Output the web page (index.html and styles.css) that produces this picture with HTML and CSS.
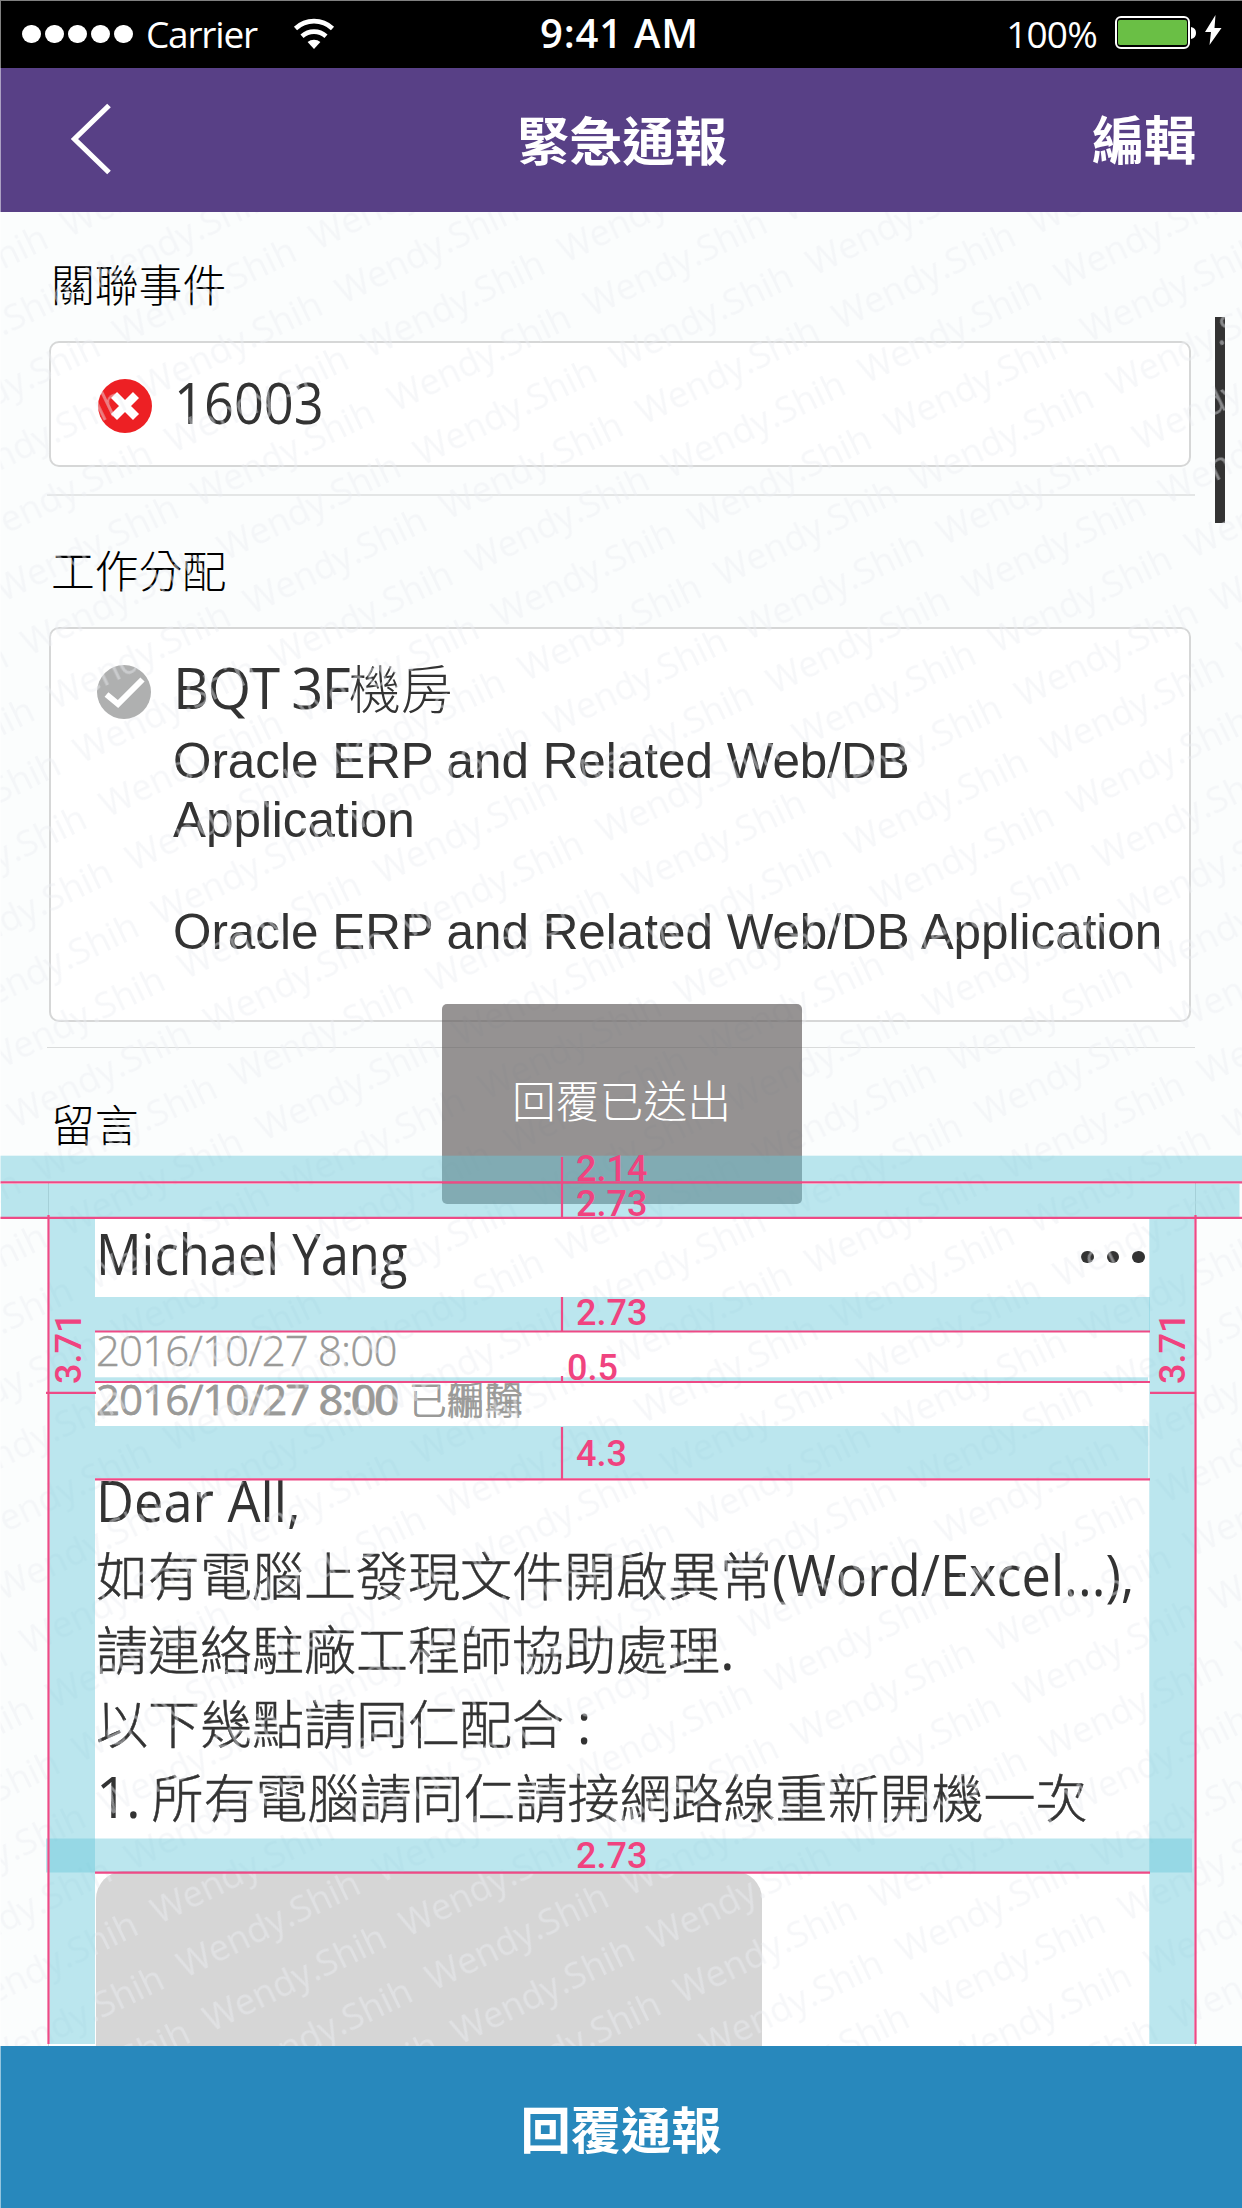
FILE: index.html
```html
<!DOCTYPE html>
<html lang="zh-Hant">
<head>
<meta charset="utf-8">
<title>緊急通報</title>
<link rel="stylesheet" href="styles.css">
</head>
<body>
<div class="screen">
  <div class="status">
    <div class="status-left">
      <span class="signal"><i></i><i></i><i></i><i></i><i></i></span>
      <span class="carrier">Carrier</span>
      <svg class="wifi" width="42" height="32" viewBox="0 0 42 32">
        <path d="M2.5 10.5 A27 27 0 0 1 39.5 10.5" fill="none" stroke="#fff" stroke-width="4.6"/>
        <path d="M9 18.2 A18 18 0 0 1 33 18.2" fill="none" stroke="#fff" stroke-width="4.6"/>
        <path d="M14.6 24 A10 10 0 0 1 27.4 24 L21 31 Z" fill="#fff"/>
      </svg>
    </div>
    <div class="clock">9:41 AM</div>
    <div class="status-right">
      <span class="percent">100%</span>
      <svg class="battery" width="110" height="40" viewBox="0 0 110 40">
        <rect x="2" y="5" width="73" height="31" rx="5" fill="none" stroke="#fff" stroke-width="2"/>
        <rect x="4" y="8" width="69" height="25" rx="2" fill="#6abf45"/>
        <path d="M77 15 q5 1 5 6 q0 5 -5 6 Z" fill="#fff"/>
        <path d="M101.5 3 L91 20 L97 20 L95.500 33 L107.500 16 L100.500 16 Z" fill="#fff"/>
      </svg>
    </div>
  </div>
  <header class="nav">
    <svg class="back" width="50" height="76" viewBox="0 0 50 76"><path d="M43 4.500 L8.500 38 L43 71.500" fill="none" stroke="#fff" stroke-width="5.200"/></svg>
    <h1>緊急通報</h1>
    <span class="edit">編輯</span>
  </header>
  <main class="content">
    <h2>關聯事件</h2>
    <div class="card event">
      <svg width="54" height="54" viewBox="0 0 54 54"><circle cx="27" cy="27" r="27" fill="#ed2024"/><path d="M16 16 L38 38 M38 16 L16 38" stroke="#fff" stroke-width="8.500"/></svg>
      <span class="latin narrow">16003</span>
    </div>
    <hr>
    <h2>工作分配</h2>
    <div class="card work">
      <svg width="54" height="54" viewBox="0 0 54 54"><circle cx="27" cy="27" r="27" fill="#afb0b0"/><path d="M9.500 29.500 L21 39 L45.500 14.500" fill="none" stroke="#fff" stroke-width="6"/></svg>
      <div class="work-text">
        <p class="room"><span class="latin">BQT 3F</span>機房</p>
        <p class="system">Oracle ERP and Related Web/DB<br>Application</p>
        <p class="system">Oracle ERP and Related Web/DB Application</p>
      </div>
    </div>
    <hr class="thin">
    <h2>留言</h2>
    <article class="comment">
      <div class="author"><span class="latin narrow">Michael Yang</span><span class="more"><i></i><i></i><i></i></span></div>
      <div class="date">2016/10/27 8:00</div>
      <div class="date edited">
        <span class="stack"><span>2016/10/27 8:00</span><span class="strong">2016/10/27 8:00</span></span>
        <span class="stack state"><span>已編輯</span><span>已刪除</span></span>
      </div>
      <div class="message"><span class="latin narrow">Dear All,</span><br>如有電腦上發現文件開啟異常<span class="latin narrow">(Word/Excel...),</span><br>請連絡駐廠工程師協助處理<span class="latin">.</span><br>以下幾點請同仁配合<span class="latin"> :</span><br><span class="latin">1. </span>所有電腦請同仁請接網路線重新開機一次</div>
      <div class="photo"></div>
    </article>
    <div class="scrollbar"></div>
    <svg class="watermark" width="1242" height="1834" viewBox="0 212 1242 1834">
      <defs>
        <pattern id="mark" x="0" y="-42" width="218" height="59.900" patternUnits="userSpaceOnUse" patternTransform="translate(644 425.400) rotate(-25.830)">
          <text x="0" y="42" textLength="198" class="mark-text">Wendy.Shih</text>
        </pattern>
      </defs>
      <rect x="0" y="212" width="1242" height="1834" fill="url(#mark)"/>
    </svg>
  </main>
  <footer class="reply">回覆通報</footer>

  <div class="toast">回覆已送出</div>

  <svg class="spec" width="1242" height="2208" viewBox="0 0 1242 2208">
    <g class="gap">
      <rect x="0" y="1155.700" width="1242" height="26"/>
      <rect x="1" y="1184" width="1238.500" height="33"/>
      <rect x="49.500" y="1219" width="45.500" height="825"/>
      <rect x="1149.300" y="1219" width="45.200" height="825"/>
      <rect x="95" y="1297" width="1055" height="34"/>
      <rect x="95" y="1377.300" width="1053" height="4"/>
      <rect x="95" y="1426" width="1053.500" height="52"/>
      <rect x="46" y="1838.500" width="1146" height="34"/>
    </g>
    <g class="line">
      <path d="M0 1182.300 H1242 M0 1217.800 H1242"/>
      <path d="M95 1331.500 H1150 M95 1382 H1150 M95 1479.300 H1150 M95 1872.600 H1150"/>
      <path d="M48.500 1215 V2044 M1195.500 1215 V2044 M46 1392.800 H96 M1150 1392.800 H1195"/>
      <path d="M562 1157 V1217 M562 1297 V1331 M562 1376 V1382 M562 1427 V1479"/>
    </g>
    <g class="value">
      <text x="576" y="1180.500">2.14</text>
      <text x="576" y="1215.500">2.73</text>
      <text x="576" y="1325.300">2.73</text>
      <text x="567" y="1380">0.5</text>
      <text x="576" y="1465.500">4.3</text>
      <text x="576" y="1868.300">2.73</text>
      <text transform="translate(81 1384) rotate(-90)">3.71</text>
      <text transform="translate(1184.500 1384) rotate(-90)">3.71</text>
    </g>
  </svg>
</div>
</body>
</html>
```
FILE: styles.css
```css
* { box-sizing: border-box; }
body { margin: 0; }
h1, h2, p, hr { margin: 0; font-weight: inherit; font-size: inherit; }

.screen {
  position: relative;
  width: 1242px;
  height: 2208px;
  overflow: hidden;
  display: flex;
  flex-direction: column;
  background: #fbfdfd;
  color: #333;
  font-family: "Noto Sans CJK TC", sans-serif;
}
.screen::after {
  content: "";
  position: absolute;
  inset: 0;
  border-top: 1px solid rgba(255, 255, 255, .5);
  border-left: 1px solid rgba(255, 255, 255, .5);
}

.latin {
  font-family: "Open Sans", "Noto Sans", sans-serif;
  font-size: 56px;
  letter-spacing: -1.900px;
  line-height: 0;
  white-space: pre;
}
/* condensed latin runs */
.narrow {
  display: inline-block;
  letter-spacing: 0;
  transform: scaleX(.935);
  transform-origin: left;
}

/* status bar */
.status {
  flex: none;
  height: 68px;
  background: #000;
  color: #fff;
  font: 37px/68px "Open Sans", "Noto Sans", sans-serif;
  display: grid;
  grid-template-columns: 1fr 160px 1fr;
}
.status-left, .status-right { display: flex; align-items: center; }
.status-left { padding-left: 22px; }
.signal { display: flex; gap: 4.5px; }
.signal i { width: 18.6px; height: 18.6px; border-radius: 50%; background: #fff; }
.carrier { margin-left: 13px; width: 147px; letter-spacing: -1.200px; }
.wifi { margin-top: -1px; }
.clock {
  margin-left: -3px;
  font-size: 40px;
  font-weight: 600;
  letter-spacing: .8px;
  text-align: center;
  line-height: 66px;
  white-space: nowrap;
}
.status-right { justify-content: flex-end; padding-right: 18px; }
.percent { margin-right: 17px; letter-spacing: -.8px; }
.battery { margin-top: -4px; }

/* navigation bar */
.nav {
  flex: none;
  height: 144px;
  padding: 0 46px 4px 66px;
  background: #584086;
  color: #fff;
  font-size: 52.600px;
  font-weight: 700;
  line-height: 60px;
  display: grid;
  grid-template-columns: 1fr 212px 1fr;
  align-items: center;
}
.nav h1 { margin-left: -8px; white-space: nowrap; }
.back { margin-top: 2px; }
.edit { text-align: right; font-size: 52px; }

/* scrolling content */
.content {
  position: relative;
  flex: none;
  height: 1834px;
  padding: 49px 47px 0 47px;
  overflow: hidden;
}
h2 {
  margin-left: 4px;
  color: #000;
  font-size: 43.800px;
  font-weight: 300;
  line-height: 44px;
}
.card {
  display: flex;
  align-items: flex-start;
  margin: 36px 4px 0 2px;
  padding-left: 46px;
  border: 2px solid #d6d7d7;
  border-radius: 10px;
  background: #fff;
}
.card > svg { flex: none; margin-top: 36px; }
.event { height: 126px; padding-left: 47px; }
.event .latin { margin: 29px 0 0 22px; line-height: 60px; }
hr { height: 2px; margin: 27px 0 51px; border: 0; background: #e4e6e6; }
hr.thin { height: 1px; margin: 25px 0 53px; background: #d9dbdb; }
.work { height: 395px; }
.work-text { margin: 28px 0 0 22px; }
.room { font-size: 52px; font-weight: 300; line-height: 60px; }
.room .latin { font-weight: 400; letter-spacing: -1.700px; }
.system {
  margin-top: 13.500px;
  font: 49.400px/59.500px "Liberation Sans", sans-serif;
  white-space: nowrap;
}
.system + .system { margin-top: 52px; }

.comment {
  margin: 38px -1px 0 1px;
  height: 900px;
  padding: 40px 46px 0 47px;
  border: 2px solid #d6d7d7;
  border-width: 0 1px;
  background: #fff;
}
.author { display: flex; justify-content: space-between; align-items: center; height: 60px; }
.author .latin { line-height: 60px; transform: scaleX(.905); }
.more { display: flex; gap: 13px; margin: 8px 4px 0 0; }
.more i { width: 12.600px; height: 12.600px; border-radius: 50%; background: #333; }
.date {
  margin-top: 47px;
  color: #9a9a98;
  font: 300 42px/40px "Open Sans", "Noto Sans", sans-serif;
  letter-spacing: -.850px;
  -webkit-text-stroke: .4px #9a9a98;
}
.edited { margin-top: 9px; display: flex; gap: 10px; }
.stack { display: grid; }
.stack > * { grid-area: 1 / 1; }
.strong { font-weight: 400; letter-spacing: -.950px; }
.state { font: 300 38px/38px "Noto Sans CJK TC", sans-serif; letter-spacing: 0; }
.message {
  margin-top: 44px;
  font-size: 52px;
  font-weight: 300;
  line-height: 73.900px;
  white-space: nowrap;
  -webkit-text-stroke: .5px #333;
}
.message .latin { font-weight: 400; -webkit-text-stroke: 0; }
.photo {
  width: 666px;
  height: 220px;
  margin-top: 38px;
  border-radius: 28px;
  background: #d6d6d6;
}
.scrollbar {
  position: absolute;
  left: 1215px;
  top: 105px;
  width: 10px;
  height: 206px;
  background: #333;
}
.watermark { position: absolute; left: 0; top: 0; }
.mark-text { font: 36px "Open Sans", sans-serif; fill: rgba(235, 237, 243, .46); }

.reply {
  flex: none;
  height: 162px;
  background: #2888bc;
  color: #fff;
  font-size: 50.300px;
  font-weight: 700;
  line-height: 162px;
  text-align: center;
}

.toast {
  position: absolute;
  left: 441.500px;
  top: 1004px;
  width: 360px;
  height: 200px;
  border-radius: 5px;
  background: rgba(88, 84, 84, .63);
  color: #fff;
  font-size: 43.800px;
  font-weight: 300;
  line-height: 190px;
  text-align: center;
}

/* spacing annotations */
.spec { position: absolute; left: 0; top: 0; }
.gap { fill: rgba(107, 201, 218, .46); }
.line { fill: none; stroke: #ee4a86; stroke-width: 2.200; }
.value { fill: #f0437f; font: 500 36px Roboto, sans-serif; }
```
